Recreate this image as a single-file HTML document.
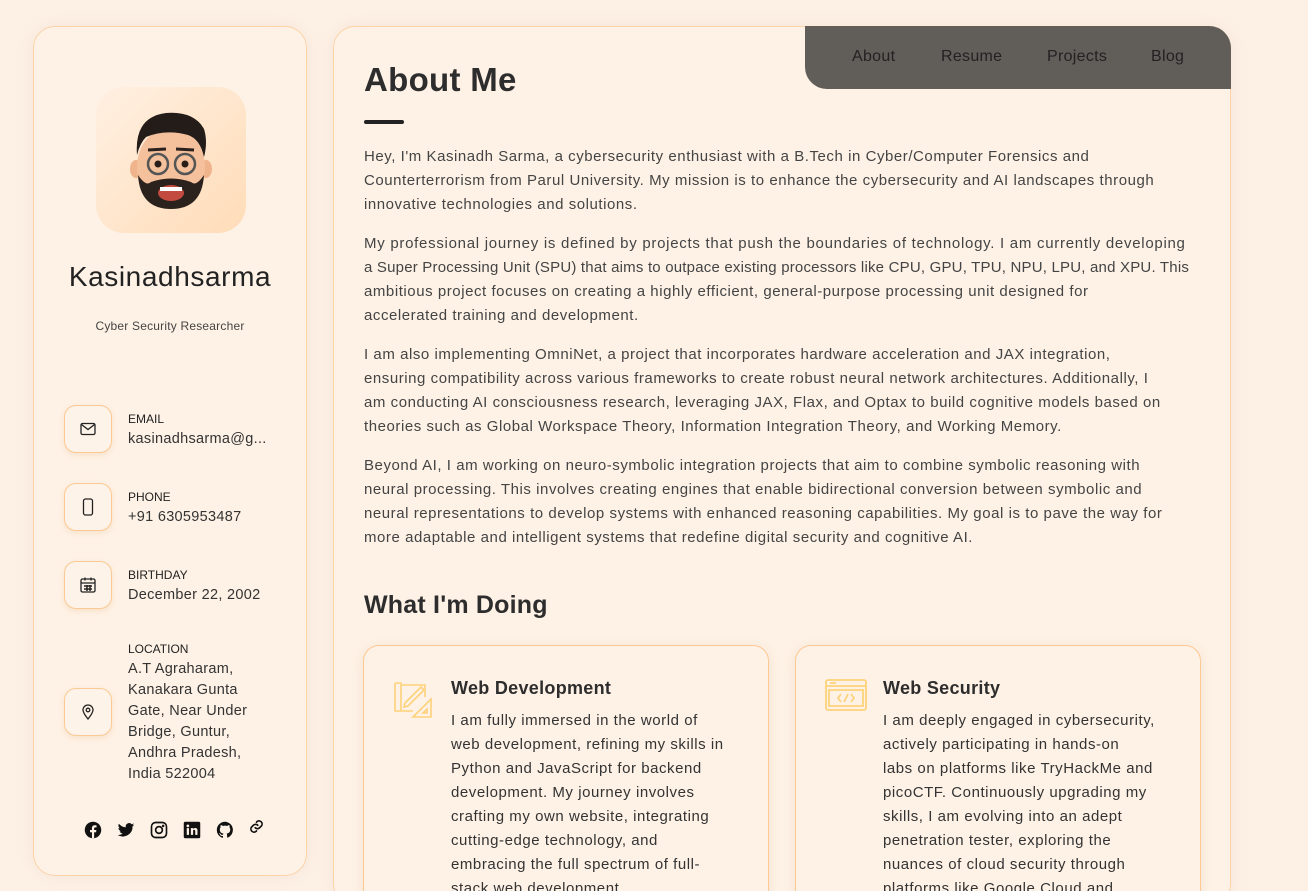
<!DOCTYPE html>
<html><head><meta charset="utf-8"><style>
*{box-sizing:border-box;margin:0;padding:0}
html,body{width:1308px;height:891px;overflow:hidden}
body{background:#fdf1e6;font-family:"Liberation Sans",sans-serif;color:#333;position:relative}
.side{position:absolute;left:33px;top:26px;width:274px;height:850px;border:1px solid #fcd3a8;border-radius:22px;background:#fef2e6;box-shadow:0 0 18px rgba(200,160,120,.15)}
.av{position:absolute;left:62px;top:60px;width:150px;height:146px;border-radius:28px;background:linear-gradient(135deg,#fff0e2,#ffdcb8)}
.name{position:absolute;left:0;width:100%;top:234px;text-align:center;font-size:28px;color:#222;letter-spacing:.6px}
.sub{position:absolute;left:0;width:100%;top:292px;text-align:center;font-size:12px;color:#444;letter-spacing:.2px}
.ib{position:absolute;left:30px;width:48px;height:48px;border:1px solid #fcc994;border-radius:12px;background:#fef3e8;box-shadow:0 2px 6px rgba(230,170,110,.25);display:flex;align-items:center;justify-content:center}
.lbl{position:absolute;left:94px;font-size:12px;color:#222}
.val{position:absolute;left:94px;font-size:14.5px;color:#333;line-height:21px;letter-spacing:.3px;white-space:nowrap}
.soc{position:absolute;top:794px;width:18px;height:18px}
.main{position:absolute;left:333px;top:26px;width:898px;height:880px;border:1px solid #fcd3a8;border-radius:22px;background:#fef2e6;box-shadow:0 0 18px rgba(200,160,120,.15);overflow:hidden}
.nav{position:absolute;left:805px;top:26px;width:426px;height:63px;background:#615d59;border-radius:0 22px 0 22px}
.nav span{position:absolute;top:22px;font-size:16px;color:#222;letter-spacing:.3px}
h1{position:absolute;left:30px;top:34px;font-size:33px;color:#2d2d2d;font-weight:bold;letter-spacing:.3px}
.bar{position:absolute;left:30px;top:93px;width:40px;height:4px;border-radius:2px;background:#222}
.txt{position:absolute;left:30px;top:118px;width:860px;font-size:15px;line-height:24px;color:#444;letter-spacing:.55px;white-space:nowrap}
.txt p{margin-bottom:15px}
h2{position:absolute;left:30px;top:564px;font-size:25px;color:#2d2d2d;font-weight:bold;letter-spacing:.2px}
.card{position:absolute;top:618px;width:406px;height:300px;border:1px solid #fcc994;border-radius:16px;background:#fef2e6;box-shadow:0 2px 12px rgba(200,160,120,.2)}
.card h3{position:absolute;left:87px;top:32px;font-size:18px;color:#2d2d2d;letter-spacing:.3px}
.card p{position:absolute;left:87px;top:63px;font-size:15px;line-height:24px;color:#333;letter-spacing:.55px;white-space:nowrap}
.card svg{position:absolute;left:29px;top:33px}
</style></head><body>
<div class="side">
 <div class="av"><svg width="150" height="146" viewBox="0 0 150 146">
  <ellipse cx="40" cy="82" rx="6" ry="9" fill="#f0b48c"/><ellipse cx="110" cy="82" rx="6" ry="9" fill="#f0b48c"/>
  <ellipse cx="75" cy="80" rx="34" ry="40" fill="#f4c19c"/>
  <path d="M42 88 Q44 122 75 122 Q106 122 108 88 Q100 100 95 95 Q75 88 55 95 Q50 100 42 88Z" fill="#2b211d"/>
  <ellipse cx="75" cy="106" rx="13" ry="8" fill="#c24a3e"/><rect x="64" y="100" width="22" height="4" fill="#fff"/>
  <path d="M41 68 Q38 30 70 26 Q98 24 108 42 Q112 55 108 70 Q104 52 92 48 Q70 42 50 50 Q44 56 41 68Z" fill="#241c19"/>
  <circle cx="62" cy="77" r="10" fill="none" stroke="#555" stroke-width="2.5"/><circle cx="89" cy="77" r="10" fill="none" stroke="#555" stroke-width="2.5"/>
  <circle cx="62" cy="77" r="3.5" fill="#2a1d18"/><circle cx="89" cy="77" r="3.5" fill="#2a1d18"/>
  <path d="M52 63 L70 62 M80 62 L98 63" stroke="#2b211d" stroke-width="3"/></svg></div>
 <div class="name">Kasinadhsarma</div>
 <div class="sub">Cyber Security Researcher</div>
 <div class="ib" style="top:378px"><svg width="16" height="14" viewBox="0 0 16 14" fill="none" stroke="#222" stroke-width="1.3"><rect x="1" y="1.5" width="14" height="11" rx="1.5"/><path d="M1.5 2.5 L8 7.5 L14.5 2.5"/></svg></div>
 <div class="lbl" style="top:385px">EMAIL</div><div class="val" style="top:402px">kasinadhsarma@g...</div>
 <div class="ib" style="top:456px"><svg width="12" height="18" viewBox="0 0 12 18" fill="none" stroke="#222" stroke-width="1.3"><rect x="1.5" y="1" width="9" height="16" rx="2"/></svg></div>
 <div class="lbl" style="top:463px">PHONE</div><div class="val" style="top:480px">+91 6305953487</div>
 <div class="ib" style="top:534px"><svg width="16" height="16" viewBox="0 0 16 16" fill="none" stroke="#222" stroke-width="1.3"><rect x="1" y="2" width="14" height="13" rx="1.5"/><path d="M1 6h14M5 0.5v3M11 0.5v3"/><path d="M4 9h8M4 12h8M7 8v6M10 8v6" stroke-width="1.5"/></svg></div>
 <div class="lbl" style="top:541px">BIRTHDAY</div><div class="val" style="top:558px">December 22, 2002</div>
 <div class="ib" style="top:661px"><svg width="12" height="16" viewBox="0 0 12 16" fill="none" stroke="#222" stroke-width="1.3"><path d="M6 15 C2 10 1 8 1 6 A5 5 0 0 1 11 6 C11 8 10 10 6 15Z"/><circle cx="6" cy="6" r="1.8"/></svg></div>
 <div class="lbl" style="top:615px">LOCATION</div><div class="val" style="top:632px">A.T Agraharam,<br>Kanakara Gunta<br>Gate, Near Under<br>Bridge, Guntur,<br>Andhra Pradesh,<br>India 522004</div>
 <svg class="soc" style="left:50px" viewBox="0 0 24 24"><circle cx="12" cy="12" r="11" fill="#111"/><path d="M13.5 23V15h2.6l.4-3h-3v-2c0-.9.3-1.5 1.6-1.5h1.6V5.8c-.3 0-1.2-.1-2.3-.1-2.3 0-3.8 1.4-3.8 3.9V12H8v3h2.6v8z" fill="#fef2e6"/></svg>
 <svg class="soc" style="left:83px" viewBox="0 0 24 24"><path d="M23 5c-.8.4-1.7.6-2.6.7.9-.6 1.6-1.4 2-2.5-.9.5-1.9.9-2.9 1.1A4.5 4.5 0 0 0 11.8 8.4 12.8 12.8 0 0 1 2.5 3.7a4.5 4.5 0 0 0 1.4 6c-.7 0-1.4-.2-2-.6 0 2.2 1.6 4 3.6 4.4-.7.2-1.4.2-2 .1.6 1.8 2.3 3.1 4.2 3.1A9 9 0 0 1 1 18.6 12.8 12.8 0 0 0 20.7 7.2c.9-.6 1.7-1.4 2.3-2.2z" fill="#111"/></svg>
 <svg class="soc" style="left:116px" viewBox="0 0 24 24" fill="none" stroke="#111" stroke-width="2.2"><rect x="2" y="2" width="20" height="20" rx="5.5"/><circle cx="12" cy="12" r="4.5"/><circle cx="17.5" cy="6.5" r=".6" fill="#111"/></svg>
 <svg class="soc" style="left:149px" viewBox="0 0 24 24"><rect x="1" y="1" width="22" height="22" rx="2" fill="#111"/><rect x="5" y="9.5" width="3" height="9" fill="#fef2e6"/><circle cx="6.5" cy="6.5" r="1.8" fill="#fef2e6"/><path d="M10.5 9.5h3v1.3c.5-.9 1.5-1.5 2.8-1.5 2.3 0 3 1.4 3 3.6v5.6h-3v-5c0-1.2-.4-1.8-1.4-1.8s-1.4.7-1.4 1.8v5h-3z" fill="#fef2e6"/></svg>
 <svg class="soc" style="left:182px" viewBox="0 0 24 24"><path d="M12 1a11 11 0 0 0-3.5 21.4c.6.1.8-.2.8-.5v-2c-3 .7-3.7-1.4-3.7-1.4-.5-1.3-1.2-1.6-1.2-1.6-1-.7.1-.7.1-.7 1.1.1 1.7 1.1 1.7 1.1 1 1.7 2.6 1.2 3.2.9.1-.7.4-1.2.7-1.5-2.4-.3-5-1.2-5-5.4 0-1.2.4-2.2 1.1-2.9-.1-.3-.5-1.4.1-2.9 0 0 .9-.3 3 1.1a10 10 0 0 1 5.5 0c2.1-1.4 3-1.1 3-1.1.6 1.5.2 2.6.1 2.9.7.7 1.1 1.7 1.1 2.9 0 4.2-2.6 5.1-5 5.4.4.3.8 1 .8 2v3c0 .3.2.6.8.5A11 11 0 0 0 12 1z" fill="#111"/></svg>
 <svg class="soc" style="left:215px;top:792px;width:15px;height:15px" viewBox="0 0 24 24" fill="none" stroke="#111" stroke-width="2.6" stroke-linecap="round"><path d="M10 14a5 5 0 0 0 7 0l3-3a5 5 0 0 0-7-7l-1 1"/><path d="M14 10a5 5 0 0 0-7 0l-3 3a5 5 0 0 0 7 7l1-1"/></svg>
</div>
<div class="main">
 <h1>About Me</h1><div class="bar"></div>
 <div class="txt">
 <p>Hey, I'm Kasinadh Sarma, a cybersecurity enthusiast with a B.Tech in Cyber/Computer Forensics and<br>Counterterrorism from Parul University. My mission is to enhance the cybersecurity and AI landscapes through<br>innovative technologies and solutions.</p>
 <p><span style="letter-spacing:.72px">My professional journey is defined by projects that push the boundaries of technology. I am currently developing</span><br><span style="letter-spacing:.2px">a Super Processing Unit (SPU) that aims to outpace existing processors like CPU, GPU, TPU, NPU, LPU, and XPU. This</span><br>ambitious project focuses on creating a highly efficient, general-purpose processing unit designed for<br>accelerated training and development.</p>
 <p>I am also implementing OmniNet, a project that incorporates hardware acceleration and JAX integration,<br>ensuring compatibility across various frameworks to create robust neural network architectures. Additionally, I<br>am conducting AI consciousness research, leveraging JAX, Flax, and Optax to build cognitive models based on<br>theories such as Global Workspace Theory, Information Integration Theory, and Working Memory.</p>
 <p>Beyond AI, I am working on neuro-symbolic integration projects that aim to combine symbolic reasoning with<br>neural processing. This involves creating engines that enable bidirectional conversion between symbolic and<br>neural representations to develop systems with enhanced reasoning capabilities. My goal is to pave the way for<br>more adaptable and intelligent systems that redefine digital security and cognitive AI.</p>
 </div>
 <h2>What I'm Doing</h2>
 <div class="card" style="left:29px"><svg width="40" height="40" viewBox="0 0 40 40" fill="none" stroke="#fdd27a" stroke-width="1.6"><path d="M2 4v28h18M2 4h6v28M8 6h24v12"/><path d="M12 24l16-16 3 3-16 16-4 1z"/><path d="M38 20v18H20z M34 30v4h-4z"/></svg><h3>Web Development</h3><p>I am fully immersed in the world of<br>web development, refining my skills in<br>Python and JavaScript for backend<br>development. My journey involves<br>crafting my own website, integrating<br>cutting-edge technology, and<br>embracing the full spectrum of full-<br>stack web development.</p></div>
 <div class="card" style="left:461px"><svg width="42" height="34" viewBox="0 0 42 34" fill="none" stroke="#fdd27a" stroke-width="1.8"><rect x="1" y="1" width="40" height="30" rx="2"/><path d="M1 7h40M5 4h6M4 11h34v16H4z"/><path d="M16 15l-3 4 3 4M26 15l3 4-3 4M23 15l-4 8"/></svg><h3>Web Security</h3><p>I am deeply engaged in cybersecurity,<br>actively participating in hands-on<br>labs on platforms like TryHackMe and<br>picoCTF. Continuously upgrading my<br>skills, I am evolving into an adept<br>penetration tester, exploring the<br>nuances of cloud security through<br>platforms like Google Cloud and</p></div>
</div>
<div class="nav"><span style="left:47px">About</span><span style="left:136px">Resume</span><span style="left:242px">Projects</span><span style="left:346px">Blog</span></div>
</body></html>
